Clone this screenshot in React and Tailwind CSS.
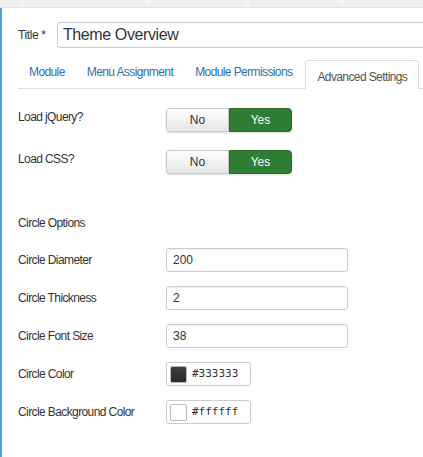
import React from "react";

const Toggle = () => (
  <div className="flex h-[24px] w-[126px] rounded-[4px] shadow-[0_1px_2px_rgba(0,0,0,0.15)]">
    <div className="flex flex-1 items-center justify-center rounded-l-[4px] border border-[#c8c8c8] bg-gradient-to-b from-white to-[#e6e6e6] text-[12px] text-[#333]">
      No
    </div>
    <div className="flex flex-1 items-center justify-center rounded-r-[4px] border border-[#2a6b2a] bg-[#2e7d32] text-[12px] text-white">
      Yes
    </div>
  </div>
);

const Row = ({ label, children, className = "", top = false }) => (
  <div className={"flex " + (top ? "items-start " : "items-center ") + className}>
    <div className="w-[148px] text-[12px] tracking-[-0.6px] text-[#333]">{label}</div>
    {children}
  </div>
);

const TextInput = ({ value }) => (
  <div className="flex h-[24px] w-[182px] items-center rounded-[3px] border border-[#ccc] bg-white px-[6px] text-[12px] text-[#333] shadow-[inset_0_1px_1px_rgba(0,0,0,0.07)]">
    {value}
  </div>
);

const ColorInput = ({ value, swatch }) => (
  <div className="flex h-[24px] w-[85px] items-center gap-[5px] rounded-[3px] border border-[#ccc] bg-white px-[3px] text-[12px] text-[#333]">
    <div className={"h-[17px] w-[17px] rounded-[2px] border border-[#bbb] " + swatch} />
    <span className="font-['DejaVu_Sans_Mono',monospace] text-[11px]">{value}</span>
  </div>
);

export default function App() {
  return (
    <div className="relative h-[457px] w-[423px] overflow-hidden bg-white font-['Liberation_Sans',Arial,sans-serif]">
      <div className="flex h-[8px] gap-[5px] border-b border-[#e2e2e2] bg-[#f4f4f4]">
        <div className="w-[20px] bg-[#f0f0f0]" />
        <div className="w-[120px] bg-[#f0f0f0]" />
        <div className="w-[95px] bg-[#f0f0f0]" />
        <div className="w-[89px] bg-[#f0f0f0]" />
        <div className="flex-1 bg-[#f0f0f0]" />
      </div>
      <div className="flex h-[449px] border-l-2 border-[#4aa3df] pl-[16px]">
        <div className="min-w-0 flex-1">
          <div className="mt-[14px] flex items-center">
            <div className="w-[39px] text-[12px] tracking-[-0.4px] text-[#333]">Title *</div>
            <div className="flex h-[26px] flex-1 items-center rounded-l-[4px] border border-r-0 border-[#ccc] px-[5px] text-[16px] tracking-[-0.4px] text-[#333]">
              Theme Overview
            </div>
          </div>
          <div className="mt-[12px] flex h-[29px] items-end whitespace-nowrap border-b border-[#ddd] text-[12px] tracking-[-0.6px]">
            <div className="shrink-0 px-[11px] pb-[7px] text-[#3071a9]">Module</div>
            <div className="shrink-0 px-[11px] pb-[7px] text-[#3071a9]">Menu Assignment</div>
            <div className="shrink-0 px-[11px] pb-[7px] text-[#3071a9]">Module Permissions</div>
            <div className="-mb-px ml-[2px] h-[29px] shrink-0 rounded-t-[4px] border border-[#ddd] border-b-white bg-white px-[11px] pt-[7px] text-[#555]">
              Advanced Settings
            </div>
          </div>
          <div className="mt-[19px] flex flex-col">
            <Row label="Load jQuery?" top><Toggle /></Row>
            <Row label="Load CSS?" top className="mt-[18px]"><Toggle /></Row>
            <div className="mt-[40px] text-[12px] tracking-[-0.6px] text-[#333]">Circle Options</div>
            <Row label="Circle Diameter" className="mt-[16px]"><TextInput value="200" /></Row>
            <Row label="Circle Thickness" className="mt-[14px]"><TextInput value="2" /></Row>
            <Row label="Circle Font Size" className="mt-[14px]"><TextInput value="38" /></Row>
            <Row label="Circle Color" className="mt-[14px]">
              <ColorInput value="#333333" swatch="bg-gradient-to-b from-[#3d3d3d] to-[#2a2a2a]" />
            </Row>
            <Row label="Circle Background Color" className="mt-[14px]">
              <ColorInput value="#ffffff" swatch="bg-white" />
            </Row>
          </div>
        </div>
      </div>
    </div>
  );
}
